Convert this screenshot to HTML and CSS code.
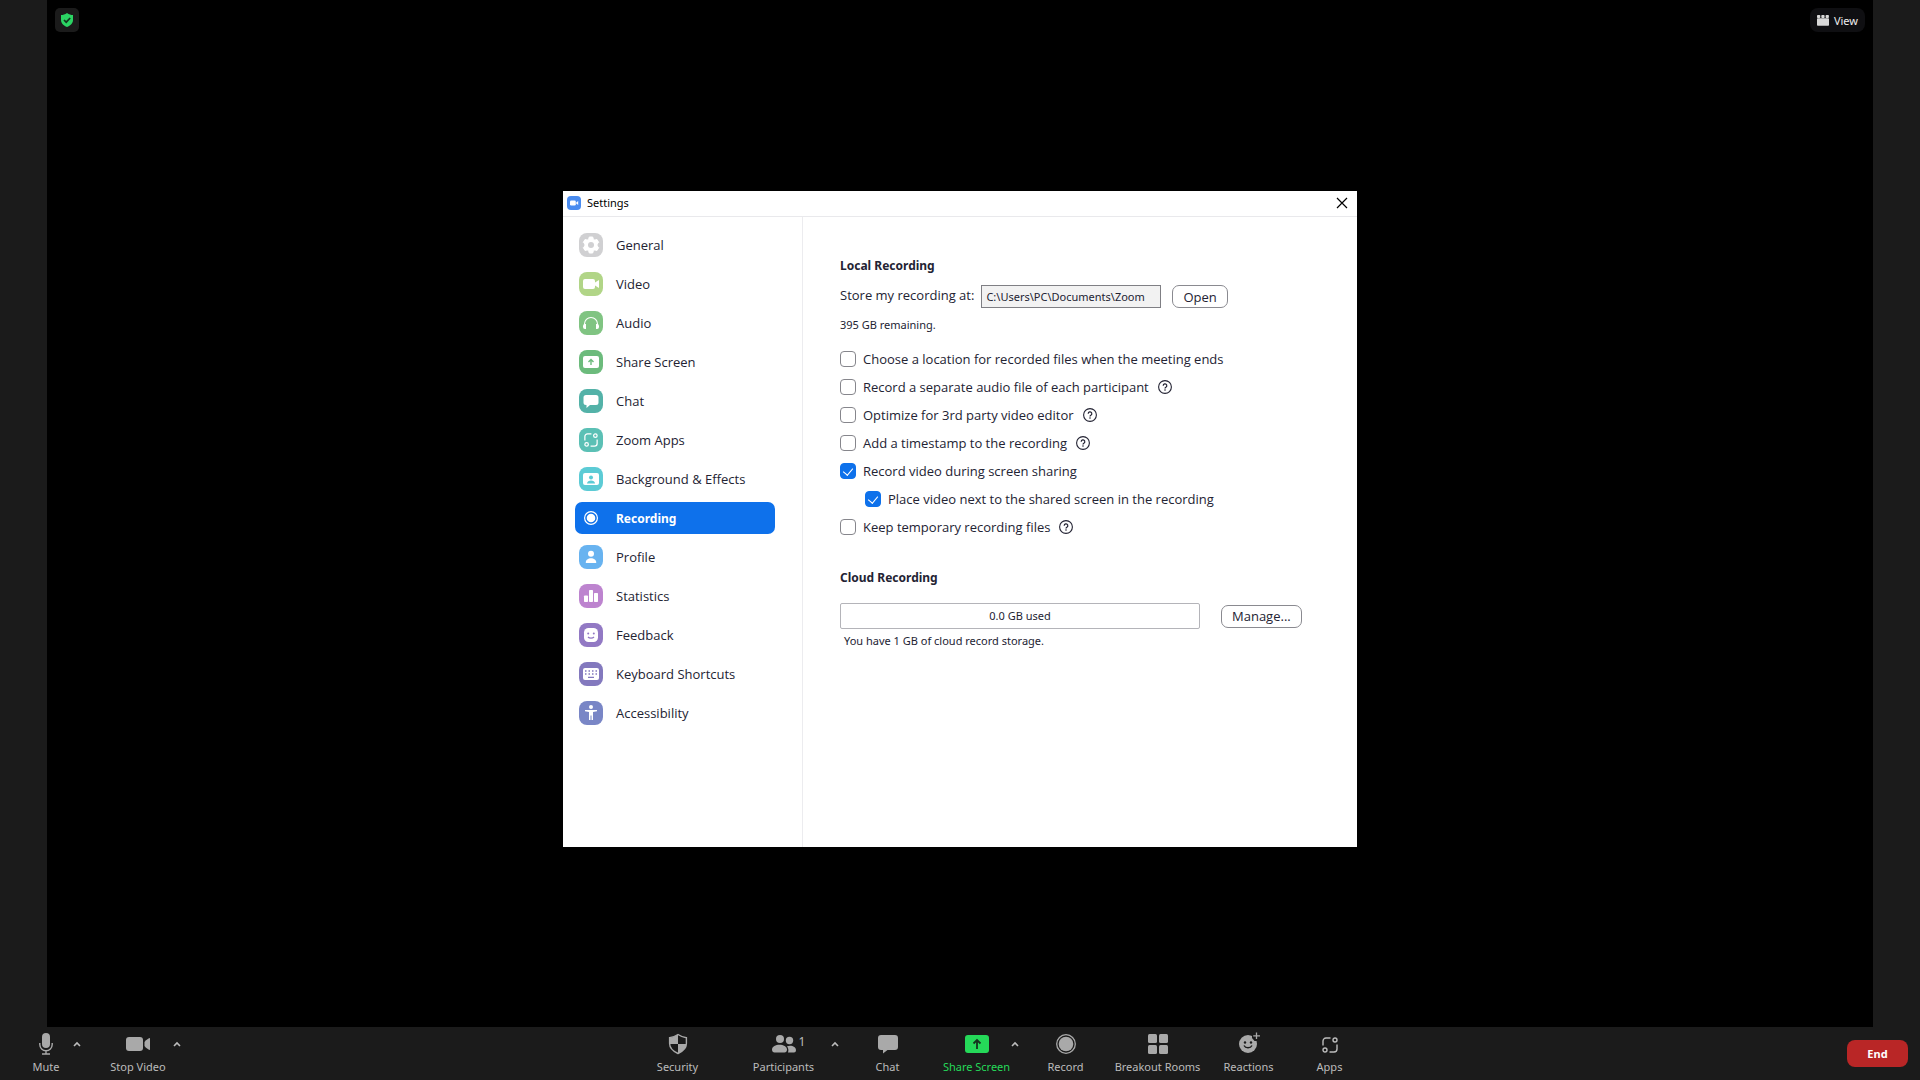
FILE: index.html
```html
<!DOCTYPE html>
<html lang="en">
<head>
    <meta charset="utf-8">
    <title>Zoom Meeting</title>
    <link rel="stylesheet" href="styles.css">
</head>
<body>
    <svg class="symbols" aria-hidden="true">
        <symbol id="caret" viewBox="0 0 8 6"><path d="M1 5 4 2l3 3" fill="none" stroke="currentColor" stroke-width="1.6"/></symbol>
        <symbol id="help" viewBox="0 0 14 14">
            <circle cx="7" cy="7" r="6.4" fill="none" stroke="currentColor" stroke-width="1.1"/>
            <path d="M5.2 5.7a1.8 1.8 0 1 1 2.7 1.5c-.6.4-.9.6-.9 1.2" fill="none" stroke="currentColor" stroke-width="1.2"/>
            <circle cx="7" cy="10" r=".8" fill="currentColor"/>
        </symbol>
        <symbol id="apps" viewBox="0 0 16 16">
            <g fill="none" stroke="currentColor" stroke-width="1.4">
                <path d="M8.500 1H4a3 3 0 0 0-3 3v4.500M7.500 15H12a3 3 0 0 0 3-3V7.500"/>
                <circle cx="13" cy="3" r="2"/>
                <circle cx="3" cy="13" r="2"/>
            </g>
        </symbol>
    </svg>

    <main class="stage">
        <div class="stage-top">
            <button class="shield-button" aria-label="Meeting information">
                <svg width="14" height="16" viewBox="0 0 14 16"><path d="M7 1c2 1.600 4 2 6 2v5c0 3.500-2.500 5.500-6 7-3.500-1.500-6-3.500-6-7V3c2 0 4-.4 6-2z" fill="#2bd463"/><path d="m4 8 2.200 2.200L10.200 6" fill="none" stroke="#13351f" stroke-width="1.700"/></svg>
            </button>
            <button class="view-button">
                <svg width="12" height="12" viewBox="0 0 12 12" fill="#d8d8d8"><rect x="0" y="1" width="3.300" height="3" rx=".8"/><rect x="4.300" y="1" width="3.300" height="3" rx=".8"/><rect x="8.600" y="1" width="3.300" height="3" rx=".8"/><rect x="0" y="4.300" width="12" height="7.500" rx=".8"/></svg>
                View
            </button>
        </div>

        <section class="dialog" role="dialog" aria-labelledby="dialog-title">
            <header class="title-bar">
                <svg width="14" height="14" viewBox="0 0 14 14"><rect width="14" height="14" rx="4" fill="#4a8cf0"/><rect x="3" y="4.500" width="5.800" height="5" rx="1.300" fill="#fff"/><path d="m9.200 6.500 2-1.500v4l-2-1.500z" fill="#fff"/></svg>
                <h1 id="dialog-title">Settings</h1>
                <button class="close" aria-label="Close">
                    <svg width="12" height="12" viewBox="0 0 12 12"><path d="m1 1 10 10M11 1 1 11" stroke="#000" stroke-width="1.200"/></svg>
                </button>
            </header>
            <div class="dialog-body">
                <nav class="menu">
                    <a href="#general">
                        <svg class="icon general" viewBox="0 0 24 24"><path d="M10.300 4h3.400l.6 2.200 1.500.9 2.200-.6 1.700 2.900-1.600 1.600v2l1.600 1.600-1.700 2.900-2.200-.6-1.500.9-.6 2.200h-3.400l-.6-2.200-1.500-.9-2.200.6-1.700-2.900L5.900 13v-2L4.300 9.400 6 6.500l2.200.6 1.500-.9z" fill="#fff" stroke="#fff" stroke-linejoin="round"/><circle cx="12" cy="12" r="3" fill="#d0d0d2"/></svg>
                        General
                    </a>
                    <a href="#video">
                        <svg class="icon video" viewBox="0 0 24 24" fill="#fff"><rect x="4" y="7" width="12" height="10" rx="2"/><path d="m16 10.500 4-2.500v8l-4-2.500z"/></svg>
                        Video
                    </a>
                    <a href="#audio">
                        <svg class="icon audio" viewBox="0 0 24 24"><path d="M5.500 15v-2a6.500 6.500 0 0 1 13 0v2" fill="none" stroke="#fff" stroke-width="1.100"/><path d="M7 13v5H6a2 2 0 0 1-2-2v-1a2 2 0 0 1 2-2zM17 13v5h1a2 2 0 0 0 2-2v-1a2 2 0 0 0-2-2z" fill="#fff"/></svg>
                        Audio
                    </a>
                    <a href="#share">
                        <svg class="icon share" viewBox="0 0 24 24"><rect x="4" y="6" width="16" height="12" rx="2" fill="#fff"/><path d="M12 15V9.500M9.500 12 12 9.500l2.500 2.500" fill="none" stroke="#6cbb7c" stroke-width="1.400"/></svg>
                        Share Screen
                    </a>
                    <a href="#chat">
                        <svg class="icon chat" viewBox="0 0 24 24"><path d="M7 6h10a2.500 2.500 0 0 1 2.500 2.500v5A2.500 2.500 0 0 1 17 16h-6l-3.500 3v-3H7a2.500 2.500 0 0 1-2.500-2.500v-5A2.500 2.500 0 0 1 7 6z" fill="#fff"/></svg>
                        Chat
                    </a>
                    <a href="#apps-settings">
                        <svg class="icon zoom-apps" viewBox="0 0 24 24"><use href="#apps" x="5" y="5" width="14" height="14"/></svg>
                        Zoom Apps
                    </a>
                    <a href="#background">
                        <svg class="icon background" viewBox="0 0 24 24"><rect x="4" y="6" width="16" height="12" rx="2" fill="#fff"/><circle cx="12" cy="10.500" r="2" fill="#5ccbd5"/><path d="M8 16.500c0-4 8-4 8 0z" fill="#5ccbd5"/></svg>
                        Background &amp; Effects
                    </a>
                    <a href="#recording" class="active">
                        <svg class="icon" viewBox="0 0 24 24"><circle cx="12" cy="12" r="6.400" fill="none" stroke="#fff" stroke-width="1.200"/><circle cx="12" cy="12" r="4.300" fill="#fff"/></svg>
                        Recording
                    </a>
                    <a href="#profile">
                        <svg class="icon profile" viewBox="0 0 24 24" fill="#fff"><circle cx="12" cy="8.800" r="3"/><path d="M6.800 18c-.6-6.300 11-6.300 10.400 0z"/></svg>
                        Profile
                    </a>
                    <a href="#statistics">
                        <svg class="icon statistics" viewBox="0 0 24 24" fill="#fff"><rect x="5" y="11.500" width="4" height="6.500" rx=".8"/><rect x="10" y="6" width="4" height="12" rx=".8"/><rect x="15" y="9" width="4" height="9" rx=".8"/></svg>
                        Statistics
                    </a>
                    <a href="#feedback">
                        <svg class="icon feedback" viewBox="0 0 24 24"><rect x="5" y="5" width="14" height="14" rx="4.500" fill="#fff"/><circle cx="9.200" cy="10.600" r="1" fill="#9279c4"/><circle cx="14.800" cy="10.600" r="1" fill="#9279c4"/><path d="M9 14c1.500 1.600 4.500 1.600 6 0" fill="none" stroke="#9279c4" stroke-width="1.200"/></svg>
                        Feedback
                    </a>
                    <a href="#shortcuts">
                        <svg class="icon shortcuts" viewBox="0 0 24 24"><rect x="4" y="6" width="16" height="12" rx="2" fill="#fff"/><path d="M6 9h12M6 12h12" stroke="#8379be" stroke-width="1.400" stroke-dasharray="1.500 2"/><path d="M9 15.300h6" stroke="#8379be" stroke-width="1.200"/></svg>
                        Keyboard Shortcuts
                    </a>
                    <a href="#accessibility">
                        <svg class="icon accessibility" viewBox="0 0 24 24" fill="#fff"><circle cx="12" cy="6" r="2"/><path d="M6 9h12v1.200l-4 .8v8h-1.500v-4.500h-1V19H10v-8l-4-.8z"/></svg>
                        Accessibility
                    </a>
                </nav>

                <div class="content">
                    <h2>Local Recording</h2>
                    <div class="path-row">
                        <label for="path">Store my recording at:</label>
                        <input type="text" id="path" value="C:\Users\PC\Documents\Zoom" readonly>
                        <button class="small-button">Open</button>
                    </div>
                    <p class="remaining">395 GB remaining.</p>

                    <div class="check-row">
                        <input type="checkbox" id="location">
                        <label for="location">Choose a location for recorded files when the meeting ends</label>
                    </div>
                    <div class="check-row">
                        <input type="checkbox" id="separate">
                        <label for="separate">Record a separate audio file of each participant</label>
                        <button class="help" aria-label="Help"><svg width="14" height="14"><use href="#help"/></svg></button>
                    </div>
                    <div class="check-row">
                        <input type="checkbox" id="optimize">
                        <label for="optimize">Optimize for 3rd party video editor</label>
                        <button class="help" aria-label="Help"><svg width="14" height="14"><use href="#help"/></svg></button>
                    </div>
                    <div class="check-row">
                        <input type="checkbox" id="timestamp">
                        <label for="timestamp">Add a timestamp to the recording</label>
                        <button class="help" aria-label="Help"><svg width="14" height="14"><use href="#help"/></svg></button>
                    </div>
                    <div class="check-row">
                        <input type="checkbox" id="sharing" checked>
                        <label for="sharing">Record video during screen sharing</label>
                    </div>
                    <div class="check-row nested">
                        <input type="checkbox" id="place" checked>
                        <label for="place">Place video next to the shared screen in the recording</label>
                    </div>
                    <div class="check-row">
                        <input type="checkbox" id="temporary">
                        <label for="temporary">Keep temporary recording files</label>
                        <button class="help" aria-label="Help"><svg width="14" height="14"><use href="#help"/></svg></button>
                    </div>

                    <h2 class="cloud-title">Cloud Recording</h2>
                    <div class="cloud-row">
                        <div class="usage">0.0 GB used</div>
                        <button class="small-button">Manage...</button>
                    </div>
                    <p class="storage">You have 1 GB of cloud record storage.</p>
                </div>
            </div>
        </section>
    </main>

    <footer class="toolbar">
        <div class="tools">
            <button class="tool mute">
                <svg width="16" height="24" viewBox="0 0 16 24"><rect x="4" y="1" width="8" height="15" rx="4" fill="#a9a9a9"/><path d="M1.800 11v1.500a6.200 6.200 0 0 0 12.400 0V11M8 19v3M4 22h8" fill="none" stroke="#a9a9a9" stroke-width="1.400"/></svg>
                Mute
            </button>
            <button class="caret far" aria-label="Audio options"><svg width="8" height="6"><use href="#caret"/></svg></button>
            <button class="tool stop-video">
                <svg width="24" height="24" viewBox="0 0 24 24" fill="#a9a9a9"><rect x="0" y="5" width="17" height="14" rx="3"/><path d="M18.500 10c1.500-2 3.500-3.500 5.500-4v12c-2-.5-4-2-5.500-4z"/></svg>
                Stop Video
            </button>
            <button class="caret far" aria-label="Video options"><svg width="8" height="6"><use href="#caret"/></svg></button>
        </div>

        <div class="tools">
            <button class="tool security">
                <svg width="20" height="24" viewBox="0 0 20 24"><path d="M10 2.500c3 2 5.500 3 8.400 3.200v5.800c0 5-4 8-8.400 10-4.400-2-8.400-5-8.400-10V5.700C4.500 5.500 7 4.500 10 2.500z" fill="none" stroke="#a9a9a9" stroke-width="1.400"/><path d="M10 2.500V12H1.600V5.700C4.500 5.500 7 4.500 10 2.500zM10 12h8.400c0 4.700-4 7.500-8.400 9.500z" fill="#a9a9a9"/></svg>
                Security
            </button>
            <button class="tool participants">
                <svg width="24" height="24" viewBox="0 0 24 24" fill="#a9a9a9"><circle cx="8" cy="7" r="4"/><path d="M0 17.500c0-6.500 15-6.500 15 0 0 2-1 3-2.500 3h-10c-1.500 0-2.500-1-2.500-3z"/><circle cx="17.500" cy="8.500" r="3.700"/><path d="M16 20.500c.8-2.500.4-4.500-1-6.300 4-1.500 9 0 9 3.800 0 1.700-.8 2.500-2 2.500z"/></svg>
                <span class="count">1</span>
                Participants
            </button>
            <button class="caret" aria-label="Participant options"><svg width="8" height="6"><use href="#caret"/></svg></button>
            <button class="tool chat-tool">
                <svg width="20" height="24" viewBox="0 0 20 24"><path d="M3 3h14a3 3 0 0 1 3 3v9a3 3 0 0 1-3 3H9.500L5 21.500V18H3a3 3 0 0 1-3-3V6a3 3 0 0 1 3-3z" fill="#a9a9a9"/></svg>
                Chat
            </button>
            <button class="tool share-tool">
                <svg width="24" height="24" viewBox="0 0 24 24"><rect y="3" width="24" height="18" rx="3" fill="#25d959"/><path d="M12 17V8M8.500 11.500 12 8l3.500 3.500" fill="none" stroke="#15331e" stroke-width="1.800"/></svg>
                Share Screen
            </button>
            <button class="caret" aria-label="Share options"><svg width="8" height="6"><use href="#caret"/></svg></button>
            <button class="tool record-tool">
                <svg width="20" height="24" viewBox="0 0 20 24"><circle cx="10" cy="12" r="9.300" fill="none" stroke="#a9a9a9" stroke-width="1.300"/><circle cx="10" cy="12" r="7.300" fill="#a9a9a9"/></svg>
                Record
            </button>
            <button class="tool breakout-tool">
                <svg width="20" height="24" viewBox="0 0 20 24" fill="#a9a9a9"><rect y="2" width="9" height="9" rx="1.500"/><rect x="11" y="2" width="9" height="9" rx="1.500"/><rect y="13" width="9" height="9" rx="1.500"/><rect x="11" y="13" width="9" height="9" rx="1.500"/></svg>
                Breakout Rooms
            </button>
            <button class="tool reactions-tool">
                <svg width="24" height="24" viewBox="0 0 24 24"><circle cx="11" cy="12" r="9" fill="#a9a9a9"/><path d="M15 0h9v9h-6.500L15 6z" fill="#1b1b1b"/><path d="M19.500.5v6.500M16.200 3.800H23" stroke="#a9a9a9" stroke-width="1.300"/><circle cx="8" cy="10.500" r="1.200" fill="#1b1b1b"/><circle cx="14" cy="10.500" r="1.200" fill="#1b1b1b"/><path d="M7 13.500c1.500 3 6.500 3 8 0" fill="none" stroke="#1b1b1b" stroke-width="1.400"/></svg>
                Reactions
            </button>
            <button class="tool apps-tool">
                <svg width="24" height="24" viewBox="0 0 24 24"><use href="#apps" x="4" y="5" width="16" height="16"/></svg>
                Apps
            </button>
        </div>

        <button class="end">End</button>
    </footer>
</body>
</html>
```
FILE: styles.css
```css
* {
    box-sizing: border-box;
}

body {
    margin: 0;
    min-height: 100vh;
    display: flex;
    flex-direction: column;
    background-color: #1b1b1b;
    color: #232333;
    font-family: "Noto Sans", "Open Sans", sans-serif;
    font-size: 11px;
}

button {
    font: inherit;
    color: inherit;
    background: none;
    border: none;
    padding: 0;
    cursor: pointer;
}

h1, h2, p {
    margin: 0;
}

svg {
    display: block;
    flex: none;
}

.symbols {
    position: absolute;
    width: 0;
    height: 0;
}

/* meeting area */
.stage {
    flex: 1;
    margin: 0 47px;
    background-color: #000;
    display: flex;
    flex-direction: column;
    align-items: center;
}

.stage-top {
    align-self: stretch;
    display: flex;
    justify-content: space-between;
    padding: 8px;
    height: 191px;
    align-items: flex-start;
}

.shield-button {
    width: 24px;
    height: 24px;
    border-radius: 5px;
    background-color: #1b1b1b;
    display: flex;
    align-items: center;
    justify-content: center;
}

.view-button {
    height: 24px;
    padding: 0 7px;
    border-radius: 8px;
    background-color: #0f0f12;
    color: #eee;
    display: flex;
    align-items: center;
    gap: 5px;
}

/* settings window */
.dialog {
    width: 794px;
    min-height: 656px;
    background-color: #fff;
    display: flex;
    flex-direction: column;
}

.title-bar {
    height: 26px;
    display: flex;
    align-items: center;
    gap: 6px;
    padding: 0 9px 2px 4px;
    border-bottom: 1px solid #e9e9ec;
}

.title-bar h1 {
    font-size: 11px;
    font-weight: normal;
    color: #000;
}

.close {
    margin-left: auto;
}

.dialog-body {
    flex: 1;
    display: flex;
}

.menu {
    width: 240px;
    padding: 12px;
    border-right: 1px solid #ececef;
    display: flex;
    flex-direction: column;
    gap: 7px;
}

.menu a {
    width: 200px;
    height: 32px;
    padding: 0 4px;
    display: flex;
    align-items: center;
    gap: 13px;
    border-radius: 7px;
    color: #232333;
    font-family: "Open Sans", sans-serif;
    font-size: 13px;
    text-decoration: none;
}

.menu a.active {
    background-color: #0e71eb;
    color: #fff;
    font-family: "Noto Sans", sans-serif;
    font-size: 12px;
    font-weight: bold;
}

.icon {
    width: 24px;
    height: 24px;
    border-radius: 8px;
    color: #fff;
}

.general { background-color: #d0d0d2; }
.video { background-color: #b1d587; }
.audio { background-color: #80c482; }
.share { background-color: #6cbb7c; }
.chat { background-color: #53b2a8; }
.zoom-apps { background-color: #5bc0b5; }
.background { background-color: #5ccbd5; }
.profile { background-color: #68b3f0; }
.statistics { background-color: #bd84cf; }
.feedback { background-color: #9279c4; }
.shortcuts { background-color: #8379be; }
.accessibility { background-color: #7986c6; }

.content {
    flex: 1;
    padding: 39px 37px;
}

.content h2 {
    font-size: 12px;
    line-height: 20px;
}

.content label, .small-button {
    font-family: "Open Sans", sans-serif;
    font-size: 13px;
}

.path-row {
    display: flex;
    align-items: center;
    margin-top: 9px;
}

.path-row label {
    padding-bottom: 4px;
}

.path-row input {
    width: 180px;
    height: 23px;
    margin: 0 11px 0 7px;
    padding: 0 4px;
    border: 1px solid #7f7f84;
    background-color: #f2f2f2;
    color: #232333;
    font: inherit;
}

.small-button {
    height: 23px;
    padding: 0 10px;
    border: 1px solid #8a8a90;
    border-radius: 7px;
    background-color: #fff;
    line-height: 20px;
}

.remaining {
    margin: 7px 0 10px;
    line-height: 20px;
}

.check-row {
    height: 28px;
    display: flex;
    align-items: center;
    gap: 7px;
}

.check-row input {
    appearance: none;
    width: 16px;
    height: 16px;
    margin: 0;
    border: 1px solid #86868c;
    border-radius: 4px;
    display: flex;
    justify-content: center;
}

.check-row input:checked {
    background-color: #0e71eb;
    border-color: #0e71eb;
}

.check-row input:checked::after {
    content: "";
    width: 5px;
    height: 8px;
    margin-top: 2px;
    border: solid #fff;
    border-width: 0 1px 1px 0;
    transform: rotate(40deg);
}

.check-row.nested {
    padding-left: 25px;
}

.help {
    margin-left: 2px;
}

.content .cloud-title {
    margin-top: 27px;
}

.cloud-row {
    display: flex;
    align-items: center;
    gap: 21px;
    margin-top: 15px;
}

.usage {
    width: 360px;
    height: 26px;
    border: 1px solid #b4b4b9;
    border-radius: 2px;
    line-height: 24px;
    text-align: center;
}

.storage {
    margin: 2px 4px;
    line-height: 20px;
}

/* bottom bar */
.toolbar {
    height: 53px;
    padding-right: 12px;
    display: flex;
    justify-content: space-between;
    color: #bcbcbc;
}

.tools {
    display: flex;
    align-items: flex-start;
}

.tool {
    width: 92px;
    padding-top: 5px;
    display: flex;
    flex-direction: column;
    align-items: center;
    line-height: 20px;
    color: #bcbcbc;
    gap: 1px;
    position: relative;
    white-space: nowrap;
}

.tool.stop-video { width: 108px; }
.tool.security { width: 100px; }
.tool.participants { width: 112px; }
.tool.chat-tool { width: 92px; }
.tool.share-tool { width: 86px; }
.tool.record-tool { width: 88px; }
.tool.breakout-tool { width: 96px; }
.tool.reactions-tool { width: 86px; }
.tool.apps-tool { width: 76px; }

.tool.share-tool {
    color: #25d959;
}

.count {
    position: absolute;
    left: 71px;
    top: 5px;
    font-size: 12px;
}

.caret {
    width: 14px;
    height: 34px;
    display: flex;
    align-items: center;
    justify-content: center;
    margin-left: -12px;
    color: #bcbcbc;
}

.caret.far {
    margin-left: -22px;
}

.end {
    width: 61px;
    height: 27px;
    margin: 13px 0 0 36px;
    border-radius: 8px;
    background-color: #b92626;
    color: #fff;
    font-weight: bold;
}
```
